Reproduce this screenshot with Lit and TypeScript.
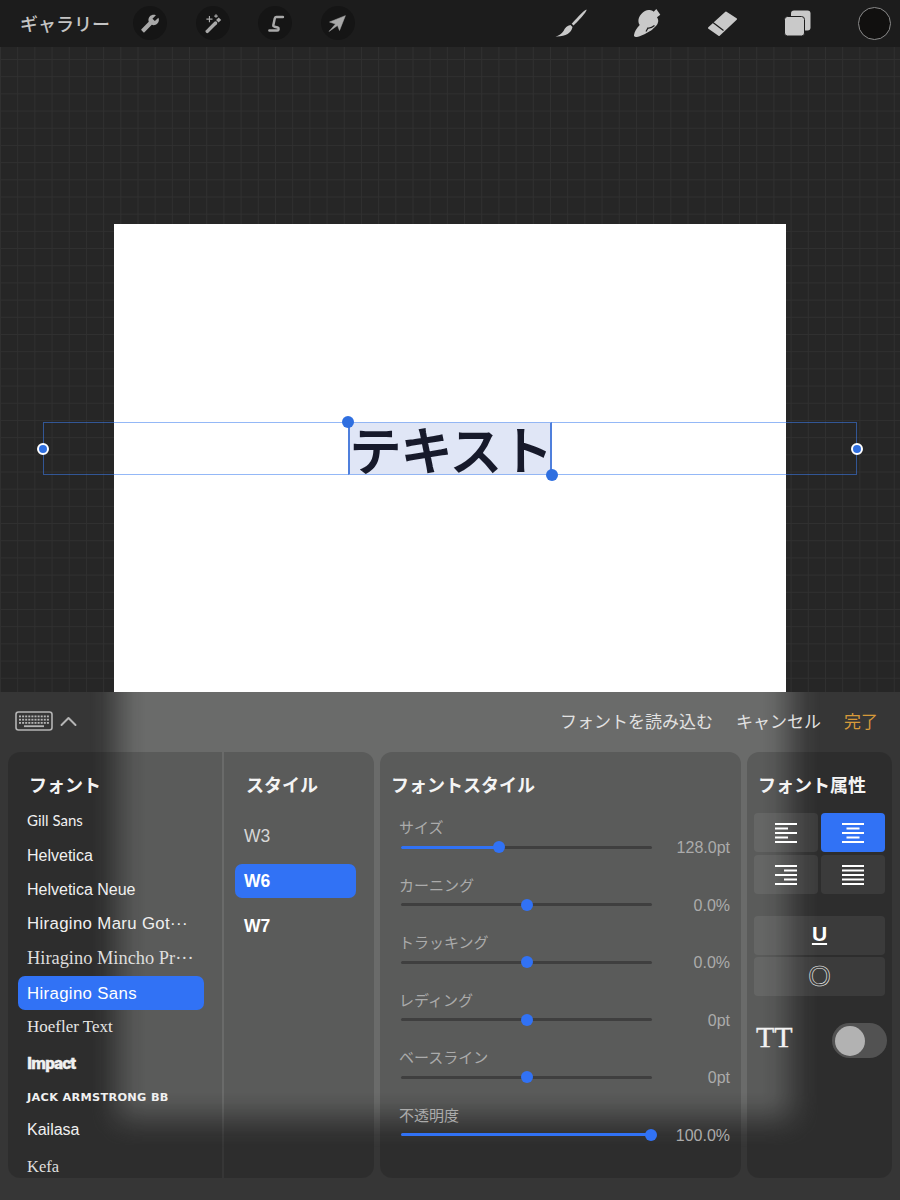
import { LitElement, html, css, svg } from "lit";
import { customElement } from "lit/decorators.js";

const tool = (p: unknown, w = 24, h = 24) =>
  html`<svg width=${w} height=${h} viewBox="0 0 ${w} ${h}">${p}</svg>`;

const wrench = tool(svg`<path fill="#a9a9a9" transform="translate(22.5 1) scale(-.92 .92)" d="M22.7 19l-9.1-9.1c.9-2.3.4-5-1.5-6.9-2-2-5-2.4-7.4-1.3L9 6 6 9 1.6 4.7C.4 7.1.9 10.1 2.9 12.1c1.9 1.9 4.6 2.4 6.9 1.5l9.1 9.1c.4.4 1 .4 1.4 0l2.3-2.3c.5-.4.5-1.1.1-1.4z"/>`);
const wand = tool(svg`<path stroke="#a9a9a9" stroke-width="4" stroke-linecap="round" d="M6 21 15.500 11.500"/><path stroke="#a9a9a9" stroke-width="4" d="M17.500 9.500 20.500 6.500"/><path stroke="#a9a9a9" stroke-width="1.300" d="M8.500 3.500v7M5 7h7M16 1.500v4M14 3.500h4"/>`);
const sCurve = tool(svg`<path fill="none" stroke="#a9a9a9" stroke-width="2.800" stroke-linecap="round" stroke-linejoin="round" d="M20.500 4.500H13c-1 0-1.500.5-1.800 1.500L9.500 14c-.2 1 .4 1.600 1.500 1.700l3.500.8c1.500.4 1.500 3.500-.5 3.500H5"/>`);
const arrow = tool(svg`<path fill="#a9a9a9" stroke="#a9a9a9" stroke-width=".6" stroke-linejoin="round" d="M21 3 2.900 10.300 9.700 12.600 2.300 21.100 12 14.300 14.300 20z"/>`);
const brush = tool(svg`<path fill="#c9c9c9" d="M31.500.5C32 2 28 7 18.500 16.500l-1.800-1.700C24 6.500 29.500 1 31.500.5Z"/><path fill="#c9c9c9" d="M15.500 16 17.500 18C16.500 24 10 28 .5 27.500 4 26.500 6.500 25 8.500 22c1.500-3 3.500-5.500 7-6Z"/>`, 32, 28);
const smudge = tool(svg`<path fill="#c9c9c9" d="M0 26C.5 23 2.500 19 5.700 16 4 14 3.500 9 7.300 5 10 2 13 .5 15.700 1c1.500.2 3 .7 4 1.700L22.300 0l4 5.700L23 8.300c1.200 1.700 1.500 3.500 1 5-.5 2.500-2 3.500-3.300 5-1.500 1.500-3 3-5 4-3.500 2-7 4-10 5-2 .5-4 1-4 .7-1.200-.2-1.900-.7-1.700-2Z"/><path fill="none" stroke="#1c1c1c" stroke-width="1.200" d="M12 22.500l2-3.500c2.500.3 4.500-.8 6.500-2.500"/>`, 28, 28);
const eraser = tool(svg`<path fill="#c9c9c9" stroke="#c9c9c9" stroke-width="2" stroke-linejoin="round" d="M18 1.500 28 8 11 24 1 17Z"/><path stroke="#1c1c1c" stroke-width="1.300" d="M5 11.500l10.500 8"/>`, 29, 25);
const layers = tool(svg`<rect x="7" y=".5" width="19.500" height="20" rx="3" fill="#c9c9c9"/><rect x=".5" y="6.500" width="20" height="19.500" rx="3" fill="#c9c9c9" stroke="#1c1c1c" stroke-width="1"/>`, 27, 27);

const keyRow = (y: number, n: number, x0: number) =>
  Array.from({ length: n }, (_, i) => svg`<rect x=${x0 + i * 3.1} y=${y} width="2" height="1.800" fill="#b5b5b5"/>`);
const keyboard = tool(svg`<rect x="1" y="1" width="36" height="18" rx="2.500" fill="none" stroke="#b5b5b5" stroke-width="1.600"/>${keyRow(4.500, 10, 4)}${keyRow(7.800, 10, 4)}${keyRow(11, 10, 4)}<rect x="9" y="14.300" width="20" height="1.800" fill="#b5b5b5"/>`, 38, 20);
const chevron = tool(svg`<path fill="none" stroke="#b5b5b5" stroke-width="2" stroke-linecap="round" stroke-linejoin="round" d="M1.500 9 8.500 2l7 7"/>`, 17, 11);

const alignIcon = (kind: string) => {
  const short = 13, full = 22;
  const x = (w: number) => (kind === "left" ? 0 : kind === "center" ? (full - w) / 2 : full - w);
  const widths = kind === "justify" ? [full, full, full, full, full] : [full, short, full, short, full];
  return tool(svg`${widths.map((w, i) => svg`<rect x=${x(w)} y=${i * 4.500} width=${w} height="2" fill="#fff"/>`)}`, 22, 20);
};

const fonts = [
  ["Gill Sans", "f-gill"],
  ["Helvetica", ""],
  ["Helvetica Neue", ""],
  ["Hiragino Maru Got\u00b7\u00b7\u00b7", "f-maru"],
  ["Hiragino Mincho Pr\u00b7\u00b7\u00b7", "f-serif"],
  ["Hiragino Sans", "sel"],
  ["Hoefler Text", "f-hoefler"],
  ["Impact", "f-impact"],
  ["JACK ARMSTRONG BB", "f-jack"],
  ["Kailasa", "f-kailasa"],
  ["Kefa", "f-kefa"],
];

const sliders = [
  ["サイズ", 39, "128.0pt", true],
  ["カーニング", 50, "0.0%", false],
  ["トラッキング", 50, "0.0%", false],
  ["レディング", 50, "0pt", false],
  ["ベースライン", 50, "0pt", false],
  ["不透明度", 99.8, "100.0%", true],
] as const;

@customElement("app-root")
export class AppRoot extends LitElement {
  static styles = css`
    :host {
      display: block;
      width: 900px;
      height: 1200px;
      overflow: hidden;
      font-family: "Liberation Sans", "Noto Sans CJK JP", sans-serif;
      background: #1c1c1c;
    }
    .top {
      height: 47px;
      display: flex;
      align-items: center;
      background: #1c1c1c;
      padding-bottom: 1px;
      box-sizing: border-box;
    }
    .gallery {
      margin-left: 20px;
      width: 113px;
      font-size: 18px;
      color: #c4c4c4;
      font-weight: 500;
      white-space: nowrap;
    }
    .tl {
      display: flex;
      gap: 28.500px;
    }
    .round {
      width: 34px;
      height: 34px;
      border-radius: 50%;
      background: #151515;
      display: flex;
      align-items: center;
      justify-content: center;
    }
    .round svg { width: 21px; height: 21px; }
    .tr {
      margin-left: auto;
      margin-right: 9px;
      display: flex;
      align-items: center;
    }
    .tr svg { display: block; }
    .b1 { margin-right: 47px; }
    .b2 { margin-right: 46px; }
    .b3 { margin-right: 47px; }
    .b4 { margin-right: 47px; }
    .color {
      width: 33px;
      height: 33px;
      box-sizing: border-box;
      border-radius: 50%;
      background: #11100f;
      border: 1.500px solid #8a8a8a;
    }
    .canvas {
      height: 645px;
      position: relative;
      overflow: hidden;
      background-color: #262626;
      background-image:
        linear-gradient(#303030 1px, transparent 1px),
        linear-gradient(90deg, #303030 1px, transparent 1px);
      background-size: 17.200px 17.200px;
      background-position: 0 12px;
      display: flex;
      justify-content: center;
      padding-top: 177px;
      box-sizing: border-box;
    }
    .page {
      width: 672px;
      height: 468px;
      background: #fff;
    }
    .box {
      position: absolute;
      left: 43px;
      top: 375px;
      width: 814px;
      height: 53px;
      box-sizing: border-box;
      border: 1px solid rgba(60, 125, 240, 0.55);
      display: flex;
      justify-content: center;
    }
    .text {
      position: relative;
      margin-top: -1px;
      height: 53px;
      width: 204px;
      box-sizing: border-box;
      background: #e0e6f6;
      border-left: 2px solid #4f7fdc;
      border-right: 2px solid #4f7fdc;
      border-top: 1px solid #93b6f4;
      border-bottom: 1px solid #93b6f4;
      color: #171a2b;
      font-size: 51px;
      font-weight: 400;
      -webkit-text-stroke: 2.200px #171a2b;
      line-height: 50px;
      text-align: center;
      white-space: nowrap;
      font-family: "Noto Sans CJK JP", sans-serif;
    }
    .dot {
      position: absolute;
      width: 12px;
      height: 12px;
      border-radius: 50%;
      background: #2f6fe0;
      -webkit-text-stroke: 0;
    }
    .d1 { left: -8px; top: -7px; }
    .d2 { right: -8px; bottom: -7px; }
    .ring {
      position: absolute;
      width: 8px;
      height: 8px;
      border-radius: 50%;
      background: #2f6fe0;
      border: 2px solid #fff;
      top: 19.500px;
    }
    .r1 { left: -7px; }
    .r2 { right: -7px; }

    .panel {
      height: 508px;
      position: relative;
      background: #363636;
      box-sizing: border-box;
    }
    .panel::before {
      content: "";
      position: absolute;
      inset: 0;
      background: #6a6b6a;
      -webkit-mask-image:
        linear-gradient(90deg, transparent 90px, rgba(0,0,0,.1) 102px, rgba(0,0,0,.35) 112px, rgba(0,0,0,.65) 123px, rgba(0,0,0,.9) 134px, #000 146px, #000 762px, rgba(0,0,0,.9) 774px, rgba(0,0,0,.65) 785px, rgba(0,0,0,.35) 796px, rgba(0,0,0,.1) 808px, transparent 820px),
        linear-gradient(180deg, #000 400px, rgba(0,0,0,.9) 410px, rgba(0,0,0,.65) 421px, rgba(0,0,0,.35) 432px, rgba(0,0,0,.1) 443px, transparent 455px);
      -webkit-mask-composite: source-in;
      mask-composite: intersect;
    }
    .inner {
      position: relative;
      height: 100%;
      display: flex;
      flex-direction: column;
    }
    .actions {
      height: 60px;
      display: flex;
      align-items: center;
      padding: 0 22px 4px 15px;
      font-size: 17px;
      color: #e2e2e2;
      box-sizing: border-box;
    }
    .actions svg { display: block; margin-top: 2px; }
    .kb { margin-right: 7px; }
    .act-r {
      margin-left: auto;
      display: flex;
      gap: 23px;
    }
    .done { color: #d79a3a; }
    .cards {
      display: flex;
      height: 426px;
      margin-left: 8px;
      gap: 6px;
    }
    .card {
      background: rgba(0, 0, 0, 0.15);
      border-radius: 12px;
      box-sizing: border-box;
      overflow: hidden;
    }
    .pair { display: flex; gap: 2px; }
    .fonts-c { width: 214px; border-radius: 12px 0 0 12px; display: flex; flex-direction: column; }
    .styles-c { width: 150px; border-radius: 0 12px 12px 0; }
    .sliders-c { width: 361px; }
    .attrs-c { width: 145px; }
    .h {
      height: 30px;
      margin-top: 19px;
      line-height: 30px;
      font-size: 18px;
      font-weight: 700;
      color: #f4f4f4;
      white-space: nowrap;
    }
    .fonts-c .h { padding-left: 21px; }
    .styles-c .h { padding-left: 22px; }
    .sliders-c .h { padding-left: 11px; }
    .attrs-c .h { padding-left: 11px; }
    .flist {
      margin-top: 2px;
      padding-left: 10px;
      width: 186px;
    }
    .f {
      height: 34.500px;
      line-height: 36.500px;
      padding-left: 9px;
      font-size: 16px;
      color: #f0f0f0;
      white-space: nowrap;
      border-radius: 7px;
    }
    .f.sel { background: #3172f5; color: #fff; font-size: 16.800px; letter-spacing: 0.350px; line-height: 35px; }
    .f-gill { font-family: "Lato", sans-serif; font-size: 15px; line-height: 34.500px; }
    .f-maru { font-size: 16.800px; letter-spacing: 0.350px; line-height: 34.500px; }
    .f-serif { font-family: "Liberation Serif", serif; font-size: 18.400px; color: #dedede; line-height: 34.500px; }
    .f-hoefler { font-family: "Liberation Serif", serif; font-size: 17px; color: #e6e6e6; line-height: 34px; }
    .f-impact { font-family: "Roboto", sans-serif; font-weight: 900; font-size: 17px; letter-spacing: -0.800px; -webkit-text-stroke: 0.300px #f0f0f0; }
    .f-jack { font-family: "DejaVu Sans", sans-serif; font-weight: 700; font-size: 11.300px; letter-spacing: 0.300px; line-height: 38px; }
    .f-kailasa { line-height: 31px; }
    .f-kefa { font-family: "Liberation Serif", serif; font-size: 16.500px; color: #dedede; line-height: 38px; }
    .slist {
      margin-top: 18px;
      padding-left: 11px;
      width: 121px;
      display: flex;
      flex-direction: column;
      gap: 11px;
    }
    .s {
      width: 121px;
      height: 34px;
      line-height: 34px;
      padding-left: 9px;
      box-sizing: border-box;
      border-radius: 7px;
      font-size: 17.500px;
      color: #d6d6d6;
    }
    .s.on { background: #3172f5; color: #fff; font-weight: 700; }
    .s.b { color: #fff; font-weight: 700; }
    .sl-list {
      margin-top: 17px;
      display: flex;
      flex-direction: column;
      gap: 17.500px;
    }
    .sl { height: 40px; padding-left: 19px; }
    .sl-l {
      height: 20px;
      line-height: 20px;
      font-size: 15px;
      color: #ababab;
    }
    .sl-r {
      height: 20px;
      display: flex;
      align-items: center;
      width: 331px;
    }
    .track {
      position: relative;
      margin-left: 2px;
      margin-top: -2px;
      width: 251px;
      height: 3px;
      border-radius: 2px;
      background: #3f3f3f;
    }
    .fill {
      height: 100%;
      border-radius: 2px;
      background: #3172f5;
    }
    .thumb {
      position: absolute;
      top: -4.500px;
      width: 12px;
      height: 12px;
      margin-left: -6px;
      border-radius: 50%;
      background: #3172f5;
    }
    .val {
      margin-left: auto;
      font-size: 16px;
      color: #ababab;
      white-space: nowrap;
    }
    .aligns {
      margin: 12px 7px 0;
      display: grid;
      grid-template-columns: 64px 64px;
      grid-auto-rows: 39px;
      gap: 3px;
    }
    .btn {
      border-radius: 4px;
      background: rgba(255, 255, 255, 0.07);
      display: flex;
      align-items: center;
      justify-content: center;
      color: #fff;
    }
    .btn svg { display: block; }
    .btn.on { background: #3172f5; }
    .wide {
      margin: 22px 7px 0;
      display: flex;
      flex-direction: column;
      gap: 2px;
    }
    .wide .btn { height: 39px; }
    .u {
      font-size: 21px;
      font-weight: 700;
      text-decoration: underline;
      text-underline-offset: 2px;
      margin-top: -4px;
    }
    .o {
      font-size: 29px;
      line-height: 33px;
      color: transparent;
      -webkit-text-stroke: 0.600px #f2f2f2;
    }
    .tt-row {
      margin: 27px 5px 0 9px;
      display: flex;
      align-items: center;
      justify-content: space-between;
    }
    .tt {
      font-family: "Liberation Serif", serif;
      font-size: 30px;
      color: #f2f2f2;
      -webkit-text-stroke: 0.300px #f2f2f2;
      line-height: 35px;
      margin-top: -9px;
    }
    .toggle {
      width: 55px;
      height: 35px;
      box-sizing: border-box;
      padding: 2.500px;
      border-radius: 18px;
      background: #525252;
    }
    .knob {
      width: 30px;
      height: 30px;
      border-radius: 50%;
      background: #b2b2b2;
    }
  `;

  render() {
    return html`
      <div class="top">
        <div class="gallery">ギャラリー</div>
        <div class="tl">
          <div class="round">${wrench}</div>
          <div class="round">${wand}</div>
          <div class="round">${sCurve}</div>
          <div class="round">${arrow}</div>
        </div>
        <div class="tr">
          <div class="b1">${brush}</div>
          <div class="b2">${smudge}</div>
          <div class="b3">${eraser}</div>
          <div class="b4">${layers}</div>
          <div class="color"></div>
        </div>
      </div>
      <div class="canvas">
        <div class="page"></div>
        <div class="box">
          <span class="ring r1"></span>
          <div class="text">
            テキスト
            <span class="dot d1"></span>
            <span class="dot d2"></span>
          </div>
          <span class="ring r2"></span>
        </div>
      </div>
      <div class="panel">
        <div class="inner">
          <div class="actions">
            <div class="kb">${keyboard}</div>
            <div>${chevron}</div>
            <div class="act-r">
              <span>フォントを読み込む</span>
              <span>キャンセル</span>
              <span class="done">完了</span>
            </div>
          </div>
          <div class="cards">
            <div class="pair">
              <div class="card fonts-c">
                <div class="h">フォント</div>
                <div class="flist">
                  ${fonts.map(([n, c]) => html`<div class="f ${c}">${n}</div>`)}
                </div>
              </div>
              <div class="card styles-c">
                <div class="h">スタイル</div>
                <div class="slist">
                  <div class="s">W3</div>
                  <div class="s on">W6</div>
                  <div class="s b">W7</div>
                </div>
              </div>
            </div>
            <div class="card sliders-c">
              <div class="h">フォントスタイル</div>
              <div class="sl-list">
                ${sliders.map(
                  ([l, v, t, filled]) => html`
                    <div class="sl">
                      <div class="sl-l">${l}</div>
                      <div class="sl-r">
                        <div class="track">
                          ${filled ? html`<div class="fill" style="width:${v}%"></div>` : ""}
                          <div class="thumb" style="left:${v}%"></div>
                        </div>
                        <div class="val">${t}</div>
                      </div>
                    </div>
                  `
                )}
              </div>
            </div>
            <div class="card attrs-c">
              <div class="h">フォント属性</div>
              <div class="aligns">
                <div class="btn">${alignIcon("left")}</div>
                <div class="btn on">${alignIcon("center")}</div>
                <div class="btn">${alignIcon("right")}</div>
                <div class="btn">${alignIcon("justify")}</div>
              </div>
              <div class="wide">
                <div class="btn"><span class="u">U</span></div>
                <div class="btn"><span class="o">O</span></div>
              </div>
              <div class="tt-row">
                <span class="tt">TT</span>
                <div class="toggle"><div class="knob"></div></div>
              </div>
            </div>
          </div>
        </div>
      </div>
    `;
  }
}
